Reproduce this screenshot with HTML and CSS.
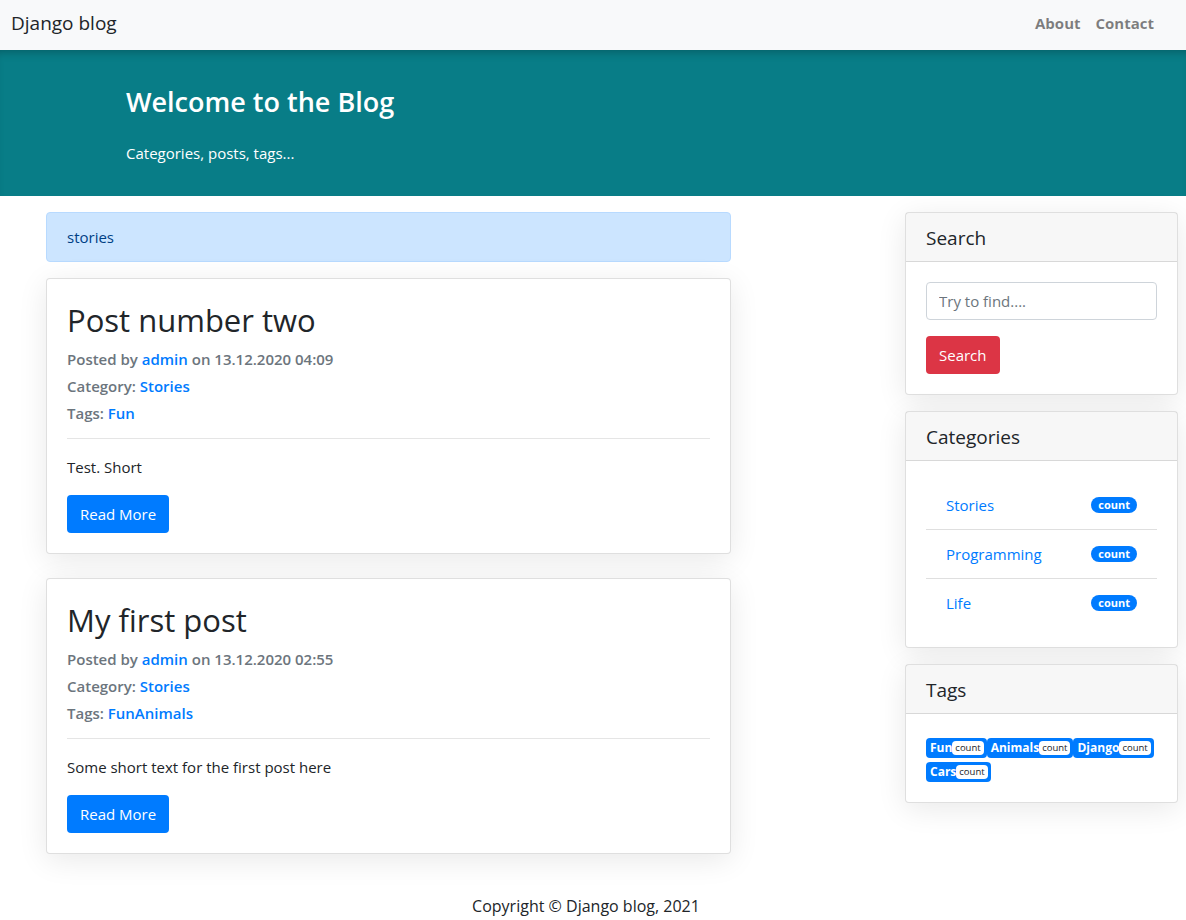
FILE: index.html
```html
<!DOCTYPE html>
<html lang="en">
<head>
<meta charset="utf-8">
<title>Django blog</title>
<link rel="stylesheet" href="styles.css">
</head>
<body>
<nav class="navbar">
  <a class="brand" href="#">Django blog</a>
  <div class="nav-links">
    <a href="#">About</a>
    <a href="#">Contact</a>
  </div>
</nav>
<header class="jumbo">
  <h1>Welcome to the Blog</h1>
  <p>Categories, posts, tags...</p>
</header>
<main class="layout">
  <section class="posts">
    <div class="alert">stories</div>
    <article class="card post">
      <h2>Post number two</h2>
      <div class="meta">Posted by <a href="#">admin</a> on 13.12.2020 04:09</div>
      <div class="meta">Category: <a href="#">Stories</a></div>
      <div class="meta">Tags: <a href="#">Fun</a></div>
      <hr>
      <p>Test. Short</p>
      <a class="btn btn-blue" href="#">Read More</a>
    </article>
    <article class="card post">
      <h2>My first post</h2>
      <div class="meta">Posted by <a href="#">admin</a> on 13.12.2020 02:55</div>
      <div class="meta">Category: <a href="#">Stories</a></div>
      <div class="meta">Tags: <a href="#">FunAnimals</a></div>
      <hr>
      <p>Some short text for the first post here</p>
      <a class="btn btn-blue" href="#">Read More</a>
    </article>
  </section>
  <aside class="sidebar">
    <div class="card">
      <div class="card-header">Search</div>
      <div class="card-body">
        <input class="input" type="text" placeholder="Try to find....">
        <button class="btn btn-red">Search</button>
      </div>
    </div>
    <div class="card">
      <div class="card-header">Categories</div>
      <div class="card-body">
        <ul class="list">
          <li><a href="#">Stories</a><span class="pill">count</span></li>
          <li><a href="#">Programming</a><span class="pill">count</span></li>
          <li><a href="#">Life</a><span class="pill">count</span></li>
        </ul>
      </div>
    </div>
    <div class="card">
      <div class="card-header">Tags</div>
      <div class="card-body tags"><a class="tag" href="#">Fun<span class="tag-count">count</span></a><a class="tag" href="#">Animals<span class="tag-count">count</span></a><a class="tag" href="#">Django<span class="tag-count">count</span></a><a class="tag" href="#">Cars<span class="tag-count">count</span></a></div>
    </div>
  </aside>
</main>
<footer class="footer">Copyright © Django blog, 2021</footer>
</body>
</html>
```
FILE: styles.css
```css
* { box-sizing: border-box; }
html, body { margin: 0; padding: 0; }
body {
  font-family: "Open Sans", "Noto Sans", sans-serif;
  font-size: 15px;
  line-height: 24px;
  color: #212529;
  background: #fff;
}
a { color: #007bff; text-decoration: none; }

.navbar {
  height: 50px;
  background: #f8f9fa;
  display: flex;
  align-items: center;
  justify-content: space-between;
  padding: 0 32px 4px 11px;
}
.brand { font-size: 19px; color: #212529; }
.nav-links { display: flex; gap: 15px; }
.nav-links a { color: rgba(0,0,0,.5); font-weight: 700; font-size: 15px; }

.jumbo {
  background: #087d87;
  box-shadow: inset 0 8px 10px -6px rgba(0,0,0,.25);
  color: #fff;
  height: 146px;
  padding: 36px 126px 0;
}
.jumbo h1 { margin: 0; font-size: 27px; font-weight: 600; line-height: 1.2; }
.jumbo p { margin: 23px 0 0; font-size: 15px; }

.layout {
  display: flex;
  justify-content: space-between;
  align-items: flex-start;
  padding: 16px 8px 0 46px;
}
.posts { width: 685px; }
.sidebar { width: 273px; display: flex; flex-direction: column; gap: 16px; }

.alert {
  background: #cce5ff;
  border: 1px solid #b8daff;
  color: #004085;
  border-radius: 4px;
  padding: 12px 20px;
  margin-bottom: 16px;
  height: 50px;
}
.card {
  background: #fff;
  border: 1px solid rgba(0,0,0,.125);
  border-radius: 4px;
  box-shadow: 0 6px 30px rgba(0,0,0,.09);
}
.post { padding: 20px; margin-bottom: 24px; }
.post h2 { margin: 2px 0 7px; font-size: 31px; font-weight: 500; line-height: 38px; }
.meta { font-size: 15px; line-height: 27px; font-weight: 600; color: #6c757d; }
.post hr { border: 0; border-top: 1px solid rgba(0,0,0,.1); margin: 11px 0 16px; }
.post p { margin: 0 0 16px; }

.btn {
  display: inline-block;
  height: 38px;
  padding: 6px 13px;
  border: 0;
  border-radius: 4px;
  font: inherit;
  line-height: 26px;
  color: #fff;
}
.btn-blue { background: #007bff; }
.btn-red { background: #dc3545; margin-top: 16px; }

.card-header {
  background: rgba(0,0,0,.03);
  border-bottom: 1px solid rgba(0,0,0,.125);
  padding: 13px 20px 11px;
  font-size: 19px;
  line-height: 24px;
  font-weight: 500;
}
.card-body { padding: 20px; }
.input {
  display: block;
  width: 100%;
  height: 38px;
  border: 1px solid #ced4da;
  border-radius: 4px;
  padding: 6px 12px;
  font: inherit;
  font-size: 15px;
  color: #495057;
}
.input::placeholder { color: #6c757d; }

.list { list-style: none; margin: 0; padding: 0; }
.list li {
  display: flex;
  justify-content: space-between;
  align-items: center;
  padding: 12px 20px;
  border-bottom: 1px solid rgba(0,0,0,.125);
}
.list li:last-child { border-bottom: 0; }
.pill {
  background: #007bff;
  color: #fff;
  font-size: 11px;
  font-weight: 700;
  line-height: 16px;
  padding: 0 7px;
  border-radius: 10px;
}

.tags {
  display: flex;
  flex-wrap: wrap;
  row-gap: 4px;
  padding: 24px 16px 20px 20px;
}
.tag {
  display: flex;
  align-items: center;
  height: 20px;
  background: #007bff;
  color: #fff;
  font-size: 12px;
  font-weight: 700;
  line-height: 14px;
  padding: 0 3px 0 4px;
  border-radius: 4px;
  white-space: nowrap;
}
.tag-count {
  display: inline-block;
  background: #fff;
  color: #212529;
  font-size: 9.5px;
  font-weight: 400;
  line-height: 14px;
  padding: 0 3px;
  border-radius: 4px;
}

.footer {
  text-align: center;
  padding: 16px 14px 2px 0;
  font-size: 16px;
  line-height: 24px;
  color: #212529;
}
```
